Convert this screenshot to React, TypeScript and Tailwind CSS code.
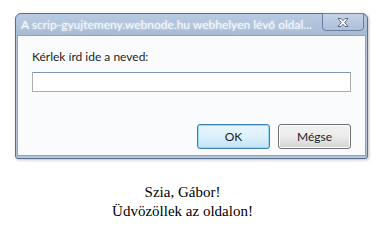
export default function App() {
  return (
    <div className="w-[385px] h-[237px] bg-white overflow-hidden">
      <div className="pt-[13px] pl-[15px]">
        <div className="w-[353px] h-[146px] flex flex-col rounded-t-[6px] rounded-b-[3px] border border-[#5b6f8f] bg-[#b4c5dc] shadow-[1px_1px_3px_rgba(0,0,0,0.25)]">
          {/* title bar */}
          <div className="relative h-[21px] flex items-center pl-[5px] bg-gradient-to-b from-[#b9cbe2] to-[#a6bad5] rounded-t-[6px]">
            <span
              className="text-[12px] text-[#f4f8fc] leading-none [text-shadow:0_0_3px_rgba(255,255,255,0.7)]"
              style={{ fontFamily: 'Lato, "Noto Sans", sans-serif' }}
            >
              A scrip-gyujtemeny.webnode.hu webhelyen lévő oldal...
            </span>
            <div className="absolute right-[3px] top-[-1px] w-[42px] h-[18px] flex items-center justify-center rounded-b-[4px] border border-[#6b80a0] bg-gradient-to-b from-[#c4d3e6] to-[#aebfd8]">
              <svg width="12" height="9" viewBox="0 0 12 9">
                <path
                  d="M1 0.5h3l2 2.2 2-2.2h3l-3.3 4 3.3 4h-3l-2-2.2-2 2.2h-3l3.3-4z"
                  fill="#ffffff"
                  stroke="#4d5e78"
                  strokeWidth="0.9"
                  strokeLinejoin="round"
                />
              </svg>
            </div>
          </div>
          {/* body */}
          <div
            className="flex-1 mx-[1px] mb-[2px] bg-[#fafbfd] border border-[#8ea1bd] flex flex-col px-[14px]"
            style={{ fontFamily: 'Lato, "Noto Sans", sans-serif' }}
          >
            <div className="mt-[13px] text-[12px] leading-[16px] text-[#1e1e1e]">Kérlek írd ide a neved:</div>
            <div className="mt-[7px] h-[20px] border border-[#abadb3] border-t-[#7f98b5] bg-white" />
            <div className="mt-auto mb-[6px] flex justify-end gap-[8px]">
              <button className="w-[73px] h-[25px] rounded-[3px] border border-[#3c7fb1] bg-gradient-to-b from-[#eaf6fd] via-[#dcf0fb] to-[#bfe3f7] text-[12px] text-[#1e1e1e] shadow-[inset_0_0_0_1px_#9fd6f2]">
                OK
              </button>
              <button className="w-[73px] h-[25px] rounded-[3px] border border-[#707070] bg-gradient-to-b from-[#f2f2f2] via-[#ebebeb] to-[#d4d4d4] text-[12px] text-[#1e1e1e] shadow-[inset_0_0_0_1px_#fcfcfc]">
                Mégse
              </button>
            </div>
          </div>
        </div>
      </div>
      <div
        className="mt-[24px] w-[365px] text-center text-[15px] leading-[19px] text-black"
        style={{ fontFamily: '"Liberation Serif", "Times New Roman", serif' }}
      >
        <div>Szia, Gábor!</div>
        <div>Üdvözöllek az oldalon!</div>
      </div>
    </div>
  );
}
